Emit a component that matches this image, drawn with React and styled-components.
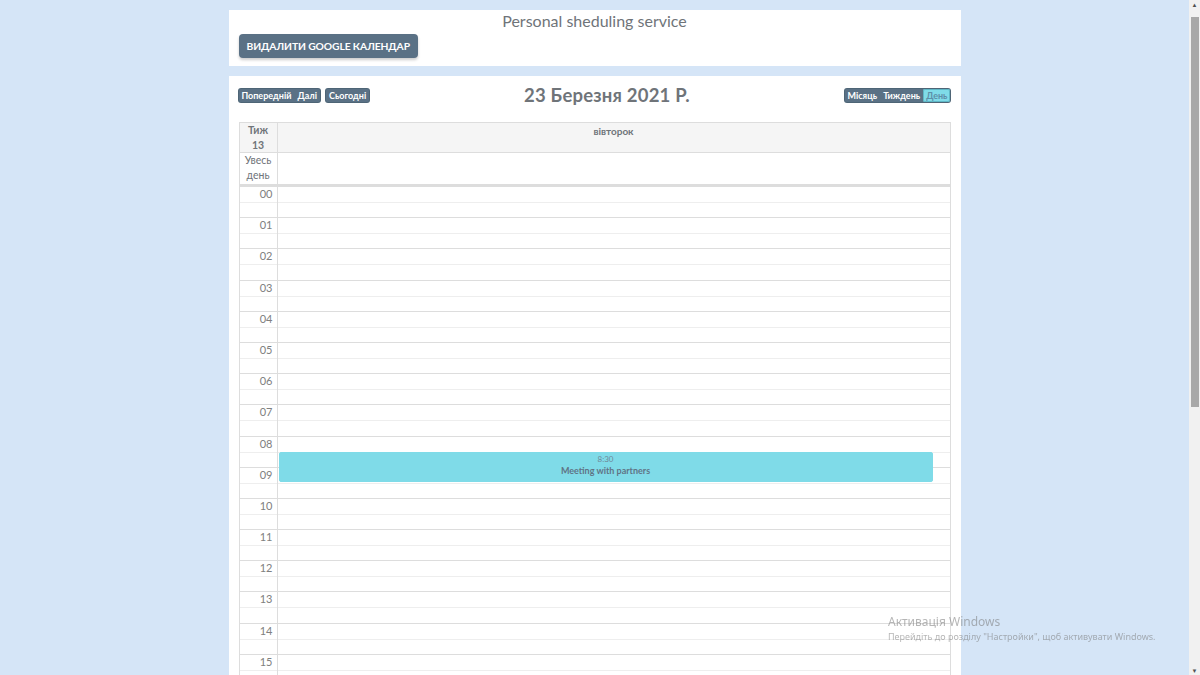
import React from 'react';
import styled, { createGlobalStyle } from 'styled-components';

const GlobalStyle = createGlobalStyle`
  html, body {
    margin: 0;
    padding: 0;
    background: #d5e5f7;
    font-family: Lato, "Open Sans", "Noto Sans", sans-serif;
  }
`;

const HOUR_H = 31.2;
const hours = ['00', '01', '02', '03', '04', '05', '06', '07', '08', '09', '10', '11', '12', '13', '14', '15'];

const events = [
    { start: 8.5, end: 9.5, time: '8:30', title: 'Meeting with partners' }
];

const Shell = styled.div`
  display: flex;
  height: 100vh;
  overflow: hidden;
`;

const Main = styled.div`
  flex: 1;
  display: flex;
  flex-direction: column;
  align-items: center;
  padding-top: 10px;
`;

const Card = styled.div`
  width: 732px;
  background: #fff;
  box-sizing: border-box;
  margin-bottom: 10px;
  padding: ${p => p.$pad};
  flex-shrink: 0;
`;

const PageTitle = styled.div`
  text-align: center;
  color: #6f7479;
  font-size: 16px;
  line-height: 20px;
`;

const DangerButton = styled.button`
  margin-top: 3px;
  background: #5a7185;
  color: #fff;
  border: none;
  border-radius: 4px;
  height: 24px;
  padding: 0 8px;
  font-family: inherit;
  font-weight: 700;
  font-size: 10.3px;
  letter-spacing: -0.1px;
  text-transform: uppercase;
  box-shadow: 0 2px 3px rgba(0, 0, 0, 0.2);
`;

const Toolbar = styled.div`
  display: flex;
  justify-content: space-between;
  align-items: center;
  height: 18px;
  margin-bottom: 18px;
`;

const Group = styled.div`
  display: flex;
  gap: 6px;
`;

const BtnGroup = styled.div`
  display: flex;
  background: #5a7185;
  border-radius: 2px;
  box-shadow: 0 0 0 1px #4e6576;
`;

const SmallBtn = styled.button`
  background: ${p => p.$active ? '#7fdbe8' : '#5a7185'};
  color: ${p => p.$active ? '#5d8fa8' : '#fff'};
  border: none;
  border-radius: 2px;
  height: 13px;
  padding: 0 3px;
  font-family: inherit;
  font-weight: 700;
  font-size: 9px;
  line-height: 13px;
  box-shadow: ${p => p.$active ? 'inset 0 0 0 1px #5fb7c6' : 'none'};
`;

const CalTitle = styled.h2`
  margin: 0;
  color: #6f7479;
  font-size: 18.5px;
  font-weight: 700;
  letter-spacing: 0.2px;
`;

const Table = styled.div`
  border: 1px solid #ddd;
  border-bottom: none;
`;

const Row = styled.div`
  display: grid;
  grid-template-columns: 38px 1fr;
  border-bottom: 1px solid #ddd;
`;

const HeadRow = styled(Row)`
  background: #f5f5f5;
  height: 29px;
`;

const AllDayRow = styled(Row)`
  height: 31px;
  border-bottom: 3px solid #ddd;
`;

const Gutter = styled.div`
  border-right: 1px solid #ddd;
  text-align: center;
  color: #6f7479;
  font-size: 10.5px;
  line-height: 15px;
  font-weight: ${p => p.$bold ? 700 : 400};
`;

const DayHead = styled.div`
  text-align: center;
  color: #6f7479;
  font-weight: 700;
  font-size: 10px;
  padding-top: 2px;
`;

const TimeGrid = styled.div`
  position: relative;
`;

const HourRow = styled.div`
  display: grid;
  grid-template-columns: 38px 1fr;
  height: ${HOUR_H}px;
  box-sizing: border-box;
  border-bottom: 1px solid #ddd;
`;

const HourLabel = styled.div`
  border-right: 1px solid #ddd;
  text-align: right;
  padding-right: 4px;
  color: #808080;
  font-size: 11px;
  line-height: 14px;
  background: linear-gradient(to bottom, transparent 15px, #eee 15px, #eee 16px, transparent 16px);
`;

const Slots = styled.div`
  background: linear-gradient(to bottom, transparent 15px, #eee 15px, #eee 16px, transparent 16px);
`;

const Event = styled.div`
  position: absolute;
  left: 39px;
  right: 17px;
  background: #7fdbe8;
  border: 1px solid #7fdbe8;
  border-radius: 2px;
  text-align: center;
  color: #5f7486;
`;

const EvTime = styled.div`
  font-size: 8px;
  line-height: 11px;
  padding-top: 1px;
  color: #6f8898;
`;

const EvTitle = styled.div`
  font-size: 9px;
  font-weight: 700;
  line-height: 12px;
`;

const Scrollbar = styled.div`
  width: 11px;
  background: #f1f1f1;
  display: flex;
  flex-direction: column;
  align-items: center;
  flex-shrink: 0;
`;

const Arrow = styled.div`
  height: 9px;
  font-size: 6px;
  line-height: 9px;
  color: #505050;
  margin-top: ${p => p.$bottom ? 'auto' : '0'};
`;

const Thumb = styled.div`
  width: 8px;
  height: 390px;
  margin-top: 8px;
  background: #a8a8a8;
`;

const Watermark = styled.div`
  position: fixed;
  left: 888px;
  top: 614px;
  color: rgba(120, 120, 120, 0.55);
  font-family: "Noto Sans", "Open Sans", sans-serif;
`;

const WmTitle = styled.div`
  font-size: 12px;
  line-height: 16px;
`;

const WmText = styled.div`
  font-size: 9px;
  line-height: 13px;
`;

const App = () => {
    return (
        <React.Fragment>
            <GlobalStyle />
            <Shell>
                <Main>
                    <Card $pad="1px 10px 8px">
                        <PageTitle>Personal sheduling service</PageTitle>
                        <DangerButton>Видалити Google календар</DangerButton>
                    </Card>
                    <Card $pad="10px 10px 0">
                        <Toolbar>
                            <Group>
                                <BtnGroup>
                                    <SmallBtn>Попередній</SmallBtn>
                                    <SmallBtn>Далі</SmallBtn>
                                </BtnGroup>
                                <BtnGroup>
                                    <SmallBtn>Сьогодні</SmallBtn>
                                </BtnGroup>
                            </Group>
                            <CalTitle>23 Березня 2021 Р.</CalTitle>
                            <Group>
                                <BtnGroup>
                                    <SmallBtn>Місяць</SmallBtn>
                                    <SmallBtn>Тиждень</SmallBtn>
                                    <SmallBtn $active>День</SmallBtn>
                                </BtnGroup>
                            </Group>
                        </Toolbar>
                        <Table>
                            <HeadRow>
                                <Gutter $bold>Тиж<br />13</Gutter>
                                <DayHead>вівторок</DayHead>
                            </HeadRow>
                            <AllDayRow>
                                <Gutter>Увесь<br />день</Gutter>
                                <div />
                            </AllDayRow>
                            <TimeGrid>
                                {hours.map(h => (
                                    <HourRow key={h}>
                                        <HourLabel>{h}</HourLabel>
                                        <Slots />
                                    </HourRow>
                                ))}
                                {events.map((ev, i) => (
                                    <Event key={i} style={{ top: ev.start * HOUR_H, height: (ev.end - ev.start) * HOUR_H - 3 }}>
                                        <EvTime>{ev.time}</EvTime>
                                        <EvTitle>{ev.title}</EvTitle>
                                    </Event>
                                ))}
                            </TimeGrid>
                        </Table>
                    </Card>
                </Main>
                <Scrollbar>
                    <Arrow>▲</Arrow>
                    <Thumb />
                    <Arrow $bottom>▼</Arrow>
                </Scrollbar>
            </Shell>
            <Watermark>
                <WmTitle>Активація Windows</WmTitle>
                <WmText>Перейдіть до розділу "Настройки", щоб активувати Windows.</WmText>
            </Watermark>
        </React.Fragment>
    );
};

export default App;
